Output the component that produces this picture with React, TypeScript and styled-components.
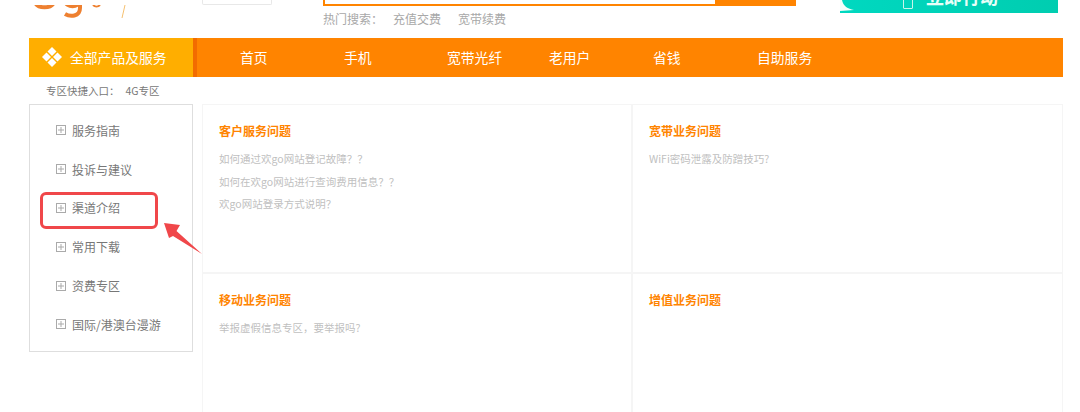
import styled, { createGlobalStyle } from "styled-components";

const GlobalStyle = createGlobalStyle`
  html, body {
    margin: 0;
    padding: 0;
    height: 412px;
    overflow: hidden;
    background: #ffffff;
    font-family: "Noto Sans CJK SC", "Liberation Sans", sans-serif;
  }
  * { box-sizing: border-box; }
`;

const Page = styled.div`
  position: relative;
  width: 1080px;
  height: 412px;
  overflow: hidden;
`;

const Header = styled.div`
  display: flex;
  height: 38px;
`;

const LogoSlot = styled.div`
  width: 202px;
  height: 14px;
  flex: none;
`;

const RegionSelect = styled.div`
  width: 70px;
  height: 5px;
  flex: none;
  background: #fff;
  border: 1px solid #e8e8e8;
  border-top: none;
  border-radius: 0 0 2px 2px;
`;

const SearchColumn = styled.div`
  width: 473px;
  margin-left: 51px;
  flex: none;
`;

const SearchBar = styled.div`
  display: flex;
  height: 6px;
`;

const SearchInput = styled.div`
  width: 394px;
  border: 2px solid #ff8400;
  border-top: none;
  background: #fff;
`;

const SearchButton = styled.div`
  flex: 1;
  background: #ff8400;
`;

const HotRow = styled.div`
  display: flex;
  margin-top: 5px;
  font-size: 12px;
  line-height: 16px;
  color: #a8a8a8;
`;

const HotLink = styled.span<{ $gap: number }>`
  margin-left: ${(p) => p.$gap}px;
`;

const Banner = styled.div`
  position: relative;
  width: 218px;
  height: 13px;
  margin-left: 44px;
  flex: none;
  overflow: hidden;
  background: linear-gradient(100deg, #00d8c0, #00cdb0);
`;

const BannerText = styled.span`
  position: absolute;
  left: 86px;
  top: -14px;
  font-size: 18px;
  font-weight: 700;
  line-height: 20px;
  color: #e8fff8;
  white-space: nowrap;
`;

const BannerCorner = styled.svg`
  position: absolute;
  left: 0;
  bottom: 0;
`;

const BannerPhone = styled.div`
  position: absolute;
  left: 63px;
  top: -4px;
  width: 10px;
  height: 13px;
  border: 1px solid #c8f5ea;
  border-radius: 1px;
`;

const Nav = styled.div`
  display: flex;
  height: 39px;
  margin: 0 17px 0 29px;
  background: #ff8400;
`;

const AllProducts = styled.div`
  display: flex;
  align-items: center;
  width: 164px;
  padding: 0 0 1px 12px;
  flex: none;
  background: #ffae00;
  color: #fff;
  font-size: 13.8px;
`;

const ProductsLabel = styled.span`
  margin-left: 7px;
`;

const NavDivider = styled.div`
  width: 4px;
  flex: none;
  background: #f26c00;
`;

const NavLinks = styled.div`
  display: grid;
  grid-template-columns: 104px 103px 102px 104px 104px auto;
  align-items: center;
  padding: 0 0 1px 43px;
  color: #fff;
  font-size: 13.8px;
`;

const QuickEntry = styled.div`
  display: flex;
  height: 27px;
  padding-left: 46px;
  align-items: center;
  font-size: 10.5px;
  color: #777;
`;

const QuickTag = styled.span`
  margin-left: 6px;
`;

const Content = styled.div`
  display: flex;
  gap: 9px;
  padding-left: 29px;
  align-items: flex-start;
`;

const SideMenu = styled.div`
  width: 164px;
  height: 248px;
  flex: none;
  padding-top: 6px;
  border: 1px solid #dedede;
`;

const SideItem = styled.div`
  display: flex;
  align-items: center;
  height: 38.8px;
  padding-left: 26px;
  font-size: 12px;
  color: #777;
`;

const SideLabel = styled.span`
  margin-left: 6px;
`;

const HelpGrid = styled.div`
  display: grid;
  grid-template-columns: 430px 431px;
  grid-template-rows: 169px 170px;
`;

const HelpCell = styled.div`
  padding: 18px 16px 0;
  border: 1px solid #f5f5f5;
`;

const HelpTitle = styled.div`
  font-size: 12px;
  font-weight: 700;
  line-height: 16px;
  color: #ff8400;
  margin-bottom: 9px;
`;

const HelpLink = styled.div`
  font-size: 10.5px;
  line-height: 22.5px;
  color: #bfbfbf;
`;

const Callout = styled.div`
  position: absolute;
  left: 40px;
  top: 192px;
  width: 118px;
  height: 37px;
  border: 3px solid #f0474a;
  border-radius: 6px;
`;

const CalloutArrow = styled.svg`
  position: absolute;
  left: 160px;
  top: 218px;
`;

const PlusBox = () => (
  <svg width="10" height="10" viewBox="0 0 10 10" fill="none" stroke="#aaa" strokeWidth="1">
    <rect x="0.5" y="0.5" width="9" height="9" />
    <path d="M5 2v6M2 5h6" />
  </svg>
);

const menuItems = ["服务指南", "投诉与建议", "渠道介绍", "常用下载", "资费专区", "国际/港澳台漫游"];

const navItems = ["首页", "手机", "宽带光纤", "老用户", "省钱", "自助服务"];

const helpSections = [
  {
    title: "客户服务问题",
    links: ["如何通过欢go网站登记故障？？", "如何在欢go网站进行查询费用信息？？", "欢go网站登录方式说明？"],
  },
  { title: "宽带业务问题", links: ["WiFi密码泄露及防蹭技巧?"] },
  { title: "移动业务问题", links: ["举报虚假信息专区，要举报吗?"] },
  { title: "增值业务问题", links: [] },
];

export default function App() {
  return (
    <Page>
      <GlobalStyle />
      <Header>
        <LogoSlot>
          <svg width="140" height="14" viewBox="0 0 140 14" fill="none">
            <path d="M35 -3C37 4 52 4 54 -3" stroke="#ee8030" strokeWidth="4" />
            <path d="M65 -4C66 3 79 3 80 -4M80 -4V3C80 12 70 12 65 9" stroke="#ee8030" strokeWidth="4" />
            <path d="M93 0C95 2 98 2 100 0" stroke="#ee8030" strokeWidth="2" />
            <path d="M125 0L122 13" stroke="#f5c070" strokeWidth="1" />
          </svg>
        </LogoSlot>
        <RegionSelect />
        <SearchColumn>
          <SearchBar>
            <SearchInput />
            <SearchButton />
          </SearchBar>
          <HotRow>
            <span>热门搜索：</span>
            <HotLink $gap={10}>充值交费</HotLink>
            <HotLink $gap={17}>宽带续费</HotLink>
          </HotRow>
        </SearchColumn>
        <Banner>
          <BannerCorner width="16" height="13" viewBox="0 0 16 13">
            <path d="M0 0H2C3 6 8 9 14 10L0 11Z" fill="#f4fffb" />
          </BannerCorner>
          <BannerPhone />
          <BannerText>立即行动</BannerText>
        </Banner>
      </Header>
      <Nav>
        <AllProducts>
          <svg width="22" height="22" viewBox="0 0 22 22" fill="#fff">
            <path d="M11 1l4.500 4.500-4.500 4.500-4.500-4.500z" />
            <path d="M5.500 6.500l4.500 4.500-4.500 4.500-4.500-4.500z" />
            <path d="M16.500 6.500l4.500 4.500-4.500 4.500-4.500-4.500z" />
            <path d="M11 12l4.500 4.500-4.500 4.500-4.500-4.500z" />
          </svg>
          <ProductsLabel>全部产品及服务</ProductsLabel>
        </AllProducts>
        <NavDivider />
        <NavLinks>
          {navItems.map((item) => (
            <span key={item}>{item}</span>
          ))}
        </NavLinks>
      </Nav>
      <QuickEntry>
        <span>专区快捷入口：</span>
        <QuickTag>4G专区</QuickTag>
      </QuickEntry>
      <Content>
        <SideMenu>
          {menuItems.map((item) => (
            <SideItem key={item}>
              <PlusBox />
              <SideLabel>{item}</SideLabel>
            </SideItem>
          ))}
        </SideMenu>
        <HelpGrid>
          {helpSections.map((section) => (
            <HelpCell key={section.title}>
              <HelpTitle>{section.title}</HelpTitle>
              {section.links.map((link) => (
                <HelpLink key={link}>{link}</HelpLink>
              ))}
            </HelpCell>
          ))}
        </HelpGrid>
      </Content>
      <Callout />
      <CalloutArrow width="44" height="38" viewBox="0 0 44 38">
        <path d="M4 5L20 7L16.500 13L42 36L13 18L9 20Z" fill="#f0474a" />
      </CalloutArrow>
    </Page>
  );
}
